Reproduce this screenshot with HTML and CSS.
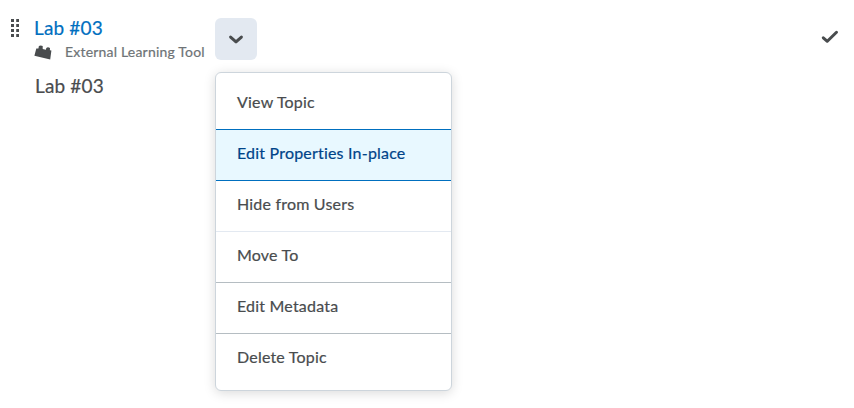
FILE: index.html
```html
<!doctype html>
<html>
<head>
<meta charset="utf-8">
<title>Lab #03</title>
<link rel="stylesheet" href="styles.css">
</head>
<body>
<section class="topic">
	<svg class="handle" width="8" height="18" viewBox="0 0 8 18">
		<path d="M0 0h3v3H0zM5.2 0h3v3h-3zM0 5h3v3H0zM5.2 5h3v3h-3zM0 10h3v3H0zM5.2 10h3v3h-3zM0 15h3v3H0zM5.2 15h3v3h-3z"/>
	</svg>
	<div class="info">
		<a href="#" class="title">Lab #03</a>
		<div class="type">
			<svg class="brick" width="18" height="15" viewBox="0 0 18 15">
				<path d="M2.3 3.6L4.4 3.4 4.9 1.1Q6.6-.1 8.7 1L8.7 4 11.9 4.7 12.3 2.9Q14 1.8 16 3L15.9 5.2 17.4 5.6 16.2 14.6 .4 10.8Z"/>
			</svg>
			<span>External Learning Tool</span>
		</div>
		<div class="desc">Lab #03</div>
	</div>
	<div class="actions">
		<a href="#" class="toggle">
			<svg width="16" height="10" viewBox="0 0 16 10">
				<path d="M2.6 3.1L8 7.9 13.4 3.1"/>
			</svg>
		</a>
		<ul class="menu">
			<li>View Topic</li>
			<li class="active">Edit Properties In-place</li>
			<li class="light">Hide from Users</li>
			<li>Move To</li>
			<li>Edit Metadata</li>
			<li>Delete Topic</li>
		</ul>
	</div>
	<svg class="check" width="18" height="14" viewBox="0 0 18 14">
		<path d="M2.3 7.8L6.3 11.3 15.5 2.3"/>
	</svg>
</section>
</body>
</html>
```

FILE: styles.css
```css
body {
	margin: 0;
	background: #fff;
	color: #494c4e;
	font-family: Lato, "Liberation Sans", sans-serif;
	-webkit-text-stroke: .2px;
}
.topic {
	display: flex;
	align-items: flex-start;
	box-sizing: border-box;
	min-height: 408px;
	padding: 18px 15px 0 11px;
}
.handle {
	margin-top: 1px;
	fill: #494c4e;
}
.info {
	width: 181px;
	margin-left: 15px;
	white-space: nowrap;
}
.title {
	display: block;
	margin-top: -1px;
	font-size: 19px;
	line-height: 22px;
	letter-spacing: .15px;
	color: #006fbf;
	text-decoration: none;
}
.type {
	display: flex;
	height: 24px;
	margin-top: 1px;
	font-size: 14px;
	line-height: 24px;
	letter-spacing: .2px;
	color: #6e7376;
}
.brick {
	margin: 5px 13px 0 0;
	fill: #494c4e;
}
.desc {
	margin-top: 11px;
	padding-left: 1px;
	font-size: 19px;
	line-height: 22px;
	letter-spacing: .15px;
}
.actions {
	position: relative;
}
.toggle {
	display: flex;
	align-items: center;
	justify-content: center;
	width: 42px;
	height: 42px;
	border-radius: 6px;
	background: #e3e9f1;
}
.toggle path,
.check path {
	fill: none;
	stroke: #494c4e;
	stroke-width: 3;
	stroke-linecap: round;
	stroke-linejoin: round;
}
.menu {
	position: absolute;
	left: 0;
	top: 54px;
	z-index: 1;
	box-sizing: border-box;
	width: 237px;
	height: 319px;
	margin: 0;
	padding: 6px 0 0;
	border: 1px solid #cdd5dc;
	border-radius: 6px;
	background: #fff;
	box-shadow: 0 2px 12px rgba(0, 0, 0, .15);
	list-style: none;
}
.menu li {
	box-sizing: border-box;
	height: 51px;
	padding: 0 21px;
	border-bottom: 1px solid #b5bdc2;
	font-size: 16px;
	line-height: 46px;
	letter-spacing: .2px;
	white-space: nowrap;
}
.menu li:first-child,
.menu li.active {
	border-color: #006fbf;
}
.menu li.active {
	background: #e8f8ff;
	color: #004489;
}
.menu li.light {
	border-color: #e3e9f1;
}
.menu li:last-child {
	border: 0;
}
.check {
	margin: 12px 0 0 auto;
}
```
